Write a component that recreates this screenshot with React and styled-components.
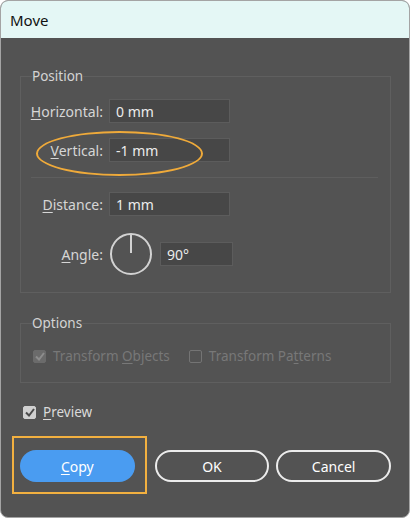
import React from "react";
import styled, { createGlobalStyle } from "styled-components";

const Global = createGlobalStyle`
  html, body { margin: 0; padding: 0; background: #ffffff; }
  body { font-family: "Noto Sans", "Open Sans", sans-serif; }
`

const Window = styled.div`
  width: 410px;
  height: 518px;
  box-sizing: border-box;
  border: 1px solid #a4a4a4;
  border-radius: 8px;
  overflow: hidden;
  display: flex;
  flex-direction: column;
  background: #535353;
`
const TitleBar = styled.div`
  height: 37px;
  flex: none;
  background: #e4f7f5;
  color: #111;
  font-size: 15px;
  display: flex;
  align-items: center;
  padding-left: 9px;
`
const Body = styled.div`
  flex: 1;
  padding: 30px 18px 0 19px;
  display: flex;
  flex-direction: column;
  color: #d8d8d8;
  font-size: 13.5px;
  position: relative;
`
const Group = styled.fieldset`
  margin: ${p => p.$top || 0}px 0 0 0;
  padding: ${p => p.$pad};
  border: 1px solid #5f5f5f;
  min-width: 0;
  height: ${p => p.$height}px;
  box-sizing: border-box;
`
const Legend = styled.legend`
  padding: 0;
  margin-left: ${p => p.$left || 11}px;
  font-size: 13.5px;
  line-height: 16px;
  color: #d4d4d4;
`
const Row = styled.div`
  display: flex;
  align-items: center;
  margin-top: ${p => p.$top || 0}px;
`
const Label = styled.label`
  width: 88px;
  padding-right: 6px;
  box-sizing: border-box;
  text-align: right;
  white-space: nowrap;
  font-size: 14px;
  color: #d6d6d6;
`
const Key = styled.span`
  text-decoration: underline;
  text-underline-offset: 2px;
`
const Input = styled.div`
  width: ${p => p.$w || 121}px;
  height: 24px;
  box-sizing: border-box;
  background: #474747;
  border: 1px solid #5c5c5c;
  color: #ececec;
  font-size: 14px;
  padding-left: 6px;
  display: flex;
  align-items: center;
  margin-left: ${p => p.$left || 0}px;
`
const Separator = styled.div`
  height: 1px;
  background: #5e5e5e;
  margin: 15px 12px 14px 10px;
`
const Dial = styled.svg`
  flex: none;
  display: block;
`
const CheckRow = styled.div`
  display: flex;
  align-items: center;
  gap: 7px;
  margin: ${p => p.$margin || 0};
  color: ${p => (p.$disabled ? "#787878" : "#dadada")};
  white-space: nowrap;
`
const Box = styled.span`
  width: 13px;
  height: 13px;
  box-sizing: border-box;
  border-radius: 2px;
  display: flex;
  align-items: center;
  justify-content: center;
  flex: none;
  background: ${p => p.$fill || "transparent"};
  border: 1px solid ${p => p.$edge};
`
const Buttons = styled.div`
  display: flex;
  gap: 7px;
  margin-top: 29px;
  position: relative;
`
const Button = styled.div`
  width: 115px;
  height: 32px;
  box-sizing: border-box;
  border-radius: 16px;
  display: flex;
  align-items: center;
  justify-content: center;
  font-size: 14px;
  color: #ffffff;
  background: ${p => (p.$primary ? "#4a9cf1" : "transparent")};
  border: ${p => (p.$primary ? "none" : "2px solid #ececec")};
  margin-left: ${p => p.$left || 0}px;
`
const Highlight = styled.div`
  position: absolute;
  border: 2px solid #f2b040;
  pointer-events: none;
`
const Ellipse = styled.div`
  position: absolute;
  border: 2px solid #efaa3a;
  border-radius: 50%;
  pointer-events: none;
`

const Check = ({ color }) => (
  <svg width="10" height="9" viewBox="0 0 10 9">
    <polyline points="1,4.5 4,7.5 9,1" fill="none" stroke={color} strokeWidth="2" />
  </svg>
)

const App = () => {
  return (
    <>
      <Global />
      <Window>
        <TitleBar>Move</TitleBar>
        <Body>
          <Group $height={225} $pad="15px 0 0 0">
            <Legend>Position</Legend>
            <Row>
              <Label><Key>H</Key>orizontal:</Label>
              <Input>0 mm</Input>
            </Row>
            <Row $top={15}>
              <Label><Key>V</Key>ertical:</Label>
              <Input>-1 mm</Input>
            </Row>
            <Separator />
            <Row>
              <Label><Key>D</Key>istance:</Label>
              <Input>1 mm</Input>
            </Row>
            <Row $top={16}>
              <Label><Key>A</Key>ngle:</Label>
              <Dial width="44" height="44" viewBox="0 0 44 44">
                <circle cx="22" cy="22" r="20" fill="none" stroke="#d2d2d2" strokeWidth="2" />
                <line x1="22" y1="3" x2="22" y2="21" stroke="#d2d2d2" strokeWidth="2" />
              </Dial>
              <Input $w={73} $left={7}>90°</Input>
            </Row>
          </Group>
          <Group $top={22} $height={68} $pad="16px 0 0 12px">
            <Legend $left={-1}>Options</Legend>
            <Row>
              <CheckRow $disabled>
                <Box $fill="#6b6b6b" $edge="#6b6b6b"><Check color="#8d8d8d" /></Box>
                <span>Transform <Key>O</Key>bjects</span>
              </CheckRow>
              <CheckRow $disabled $margin="0 0 0 19px">
                <Box $edge="#747474" />
                <span>Transform Pa<Key>t</Key>terns</span>
              </CheckRow>
            </Row>
          </Group>
          <CheckRow $margin="20px 0 0 3px">
            <Box $fill="#d0d0d0" $edge="#d0d0d0"><Check color="#4a4a4a" /></Box>
            <span><Key>P</Key>review</span>
          </CheckRow>
          <Buttons>
            <Highlight style={{ left: -8, top: -14, width: 131, height: 54 }} />
            <Button $primary><span><Key>C</Key>opy</span></Button>
            <Button $left={13}>OK</Button>
            <Button>Cancel</Button>
          </Buttons>
          <Ellipse style={{ left: 35, top: 93, width: 163, height: 41 }} />
        </Body>
      </Window>
    </>
  )
}

export default App;
